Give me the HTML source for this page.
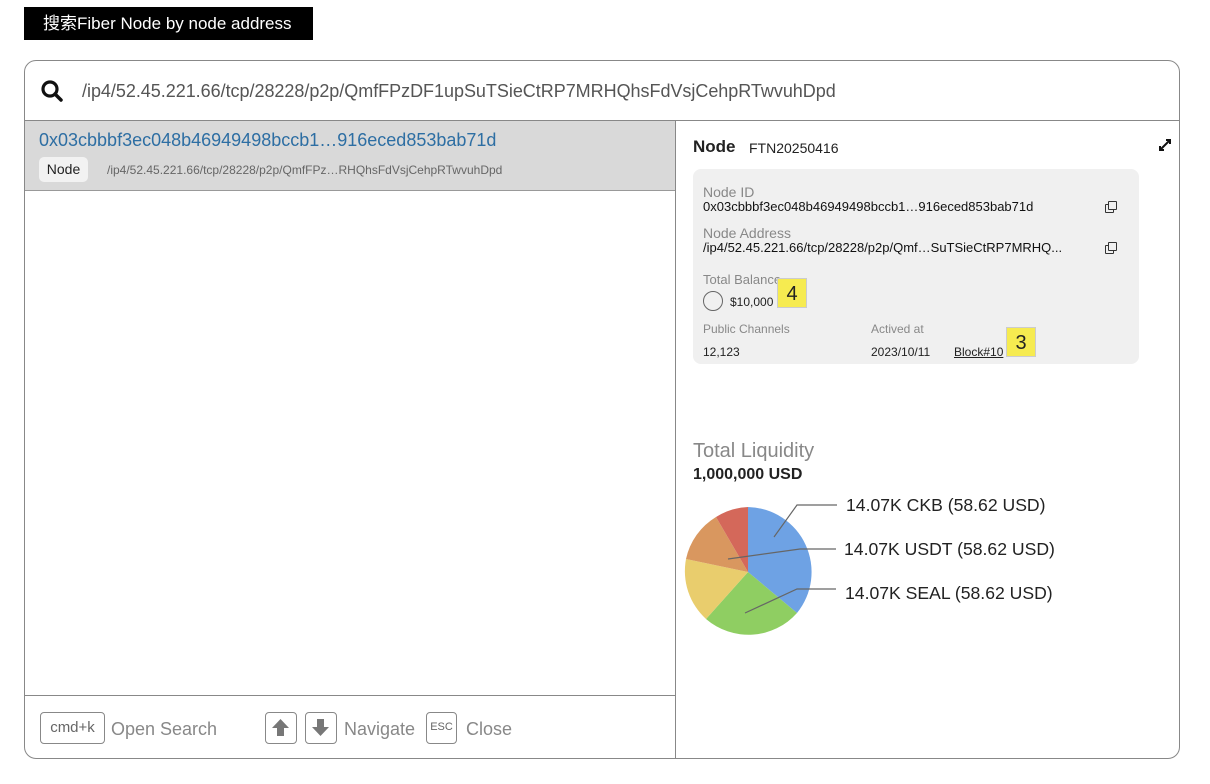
<!DOCTYPE html>
<html><head><meta charset="utf-8"><style>
*{margin:0;padding:0;box-sizing:border-box}
body{width:1210px;height:784px;background:#fff;font-family:"Liberation Sans","Noto Sans CJK SC",sans-serif;position:relative;overflow:hidden;color:#222}
.a{position:absolute}
.lbl{left:24px;top:7px;width:289px;height:33px;background:#000;color:#fff;font-size:17px;line-height:33px;padding-left:19px}
.box{left:24px;top:60px;width:1156px;height:699px;border:1.5px solid #888;border-radius:12px;overflow:hidden}
.key{border:1.5px solid #888;border-radius:4px;color:#666}
.g{color:#888}
.copy{width:9px;height:9px;border:1.3px solid #333;border-radius:1px}
.tag{background:#f6eb50;border:1px solid #ccc;width:30px;height:30px;font-size:20px;text-align:center;line-height:30px;color:#222}
</style></head><body>
<div class="a lbl">搜索Fiber Node by node address</div>
<div class="a box">
  <svg class="a" style="left:15px;top:18px" width="26" height="26" viewBox="0 0 26 26"><circle cx="10" cy="10" r="7" fill="none" stroke="#111" stroke-width="3.2"/><line x1="15" y1="15" x2="21" y2="21" stroke="#111" stroke-width="3.5" stroke-linecap="round"/></svg>
  <div class="a" style="left:57px;top:20px;font-size:18px;color:#555;letter-spacing:-0.03px">/ip4/52.45.221.66/tcp/28228/p2p/QmfFPzDF1upSuTSieCtRP7MRHQhsFdVsjCehpRTwvuhDpd</div>
  <div class="a" style="left:0;top:59px;width:1156px;border-top:1.5px solid #888"></div>
  <div class="a" style="left:0;top:60px;width:650px;height:70px;background:#d9d9d9;border-bottom:1.5px solid #999"></div>
  <div class="a" style="left:14px;top:69px;font-size:18px;color:#2d6ea3">0x03cbbbf3ec048b46949498bccb1…916eced853bab71d</div>
  <div class="a" style="left:14px;top:96px;width:49px;height:25px;background:#f2f2f2;border-radius:5px;font-size:14px;line-height:25px;text-align:center">Node</div>
  <div class="a" style="left:82px;top:102px;font-size:12px;color:#666">/ip4/52.45.221.66/tcp/28228/p2p/QmfFPz…RHQhsFdVsjCehpRTwvuhDpd</div>
  <div class="a" style="left:650px;top:59px;height:640px;border-left:1.5px solid #888"></div>
  <div class="a" style="left:0;top:634px;width:650px;border-top:1.5px solid #888"></div>
  <div class="a key" style="left:15px;top:651px;width:65px;height:32px;font-size:15px;line-height:29px;text-align:center">cmd+k</div>
  <div class="a g" style="left:86px;top:658px;font-size:18px">Open Search</div>
  <div class="a key" style="left:240px;top:651px;width:32px;height:32px"><svg width="29" height="29" viewBox="0 0 29 29"><path d="M14.5 6 L6 15 H11 V23 H18 V15 H23 Z" fill="#777"/></svg></div>
  <div class="a key" style="left:280px;top:651px;width:32px;height:32px"><svg width="29" height="29" viewBox="0 0 29 29"><path d="M14.5 23 L6 14 H11 V6 H18 V14 H23 Z" fill="#777"/></svg></div>
  <div class="a g" style="left:319px;top:658px;font-size:18px">Navigate</div>
  <div class="a key" style="left:401px;top:651px;width:31px;height:32px;font-size:11px;line-height:29px;text-align:center">ESC</div>
  <div class="a g" style="left:441px;top:658px;font-size:18px">Close</div>

  <div class="a" style="left:668px;top:76px;font-size:17px;font-weight:bold">Node</div>
  <div class="a" style="left:724px;top:79px;font-size:14px">FTN20250416</div>
  <svg class="a" style="left:1133px;top:77px" width="14" height="14" viewBox="0 0 14 14"><path d="M2 12 L12 2 M8 2 H12 V6 M2 8 V12 H6" stroke="#111" stroke-width="2" fill="none"/></svg>
  <div class="a" style="left:668px;top:108px;width:446px;height:195px;background:#f0f0f0;border-radius:8px"></div>
  <div class="a g" style="left:678px;top:123px;font-size:14px">Node ID</div>
  <div class="a" style="left:678px;top:138px;font-size:13px;color:#111">0x03cbbbf3ec048b46949498bccb1…916eced853bab71d</div>
  <div class="a g" style="left:678px;top:164px;font-size:14px">Node Address</div>
  <div class="a" style="left:678px;top:179px;font-size:13px;color:#111">/ip4/52.45.221.66/tcp/28228/p2p/Qmf…SuTSieCtRP7MRHQ...</div>
  <div class="a copy" style="left:1080px;top:143px"></div><div class="a copy" style="left:1083px;top:140px;background:#f0f0f0"></div>
  <div class="a copy" style="left:1080px;top:184px"></div><div class="a copy" style="left:1083px;top:181px;background:#f0f0f0"></div>
  <div class="a g" style="left:678px;top:211px;font-size:13px">Total Balance</div>
  <div class="a" style="left:678px;top:230px;width:20px;height:20px;border:1.3px solid #666;border-radius:50%"></div>
  <div class="a" style="left:705px;top:234px;font-size:12px">$10,000</div>
  <div class="a tag" style="left:752px;top:217px">4</div>
  <div class="a g" style="left:678px;top:261px;font-size:12px">Public Channels</div>
  <div class="a g" style="left:846px;top:261px;font-size:12px">Actived at</div>
  <div class="a" style="left:678px;top:284px;font-size:12px">12,123</div>
  <div class="a" style="left:846px;top:284px;font-size:12px">2023/10/11</div>
  <div class="a" style="left:929px;top:284px;font-size:12px;text-decoration:underline">Block#10</div>
  <div class="a tag" style="left:981px;top:266px">3</div>

  <div class="a g" style="left:668px;top:379px;font-size:20px">Total Liquidity</div>
  <div class="a" style="left:668px;top:405px;font-size:16px;font-weight:bold">1,000,000 USD</div>
</div>
<svg class="a" style="left:0;top:0" width="1210" height="784">
  <path d="M748 572 L748 507 A65 65 0 0 1 797 613 Z" fill="#6ea2e4"/>
  <path d="M748 572 L797 613 A65 65 0 0 1 706 619 Z" fill="#8fce62"/>
  <path d="M748 572 L706 619 A65 65 0 0 1 686 559 Z" fill="#e9cd6d"/>
  <path d="M748 572 L686 559 A65 65 0 0 1 716 517 Z" fill="#d9975f"/>
  <path d="M748 572 L716 517 A65 65 0 0 1 748 507 Z" fill="#d4685a"/>
  <g stroke="#666" stroke-width="1.2" fill="none">
    <polyline points="774,537 797,505 837,505"/>
    <polyline points="728,559 800,549 836,549"/>
    <polyline points="745,613 797,589 836,589"/>
  </g>
  <g font-family="Liberation Sans,sans-serif" font-size="17.6" fill="#222">
    <text x="846" y="511">14.07K CKB (58.62 USD)</text>
    <text x="844" y="555">14.07K USDT (58.62 USD)</text>
    <text x="845" y="599">14.07K SEAL (58.62 USD)</text>
  </g>
</svg>
</body></html>
